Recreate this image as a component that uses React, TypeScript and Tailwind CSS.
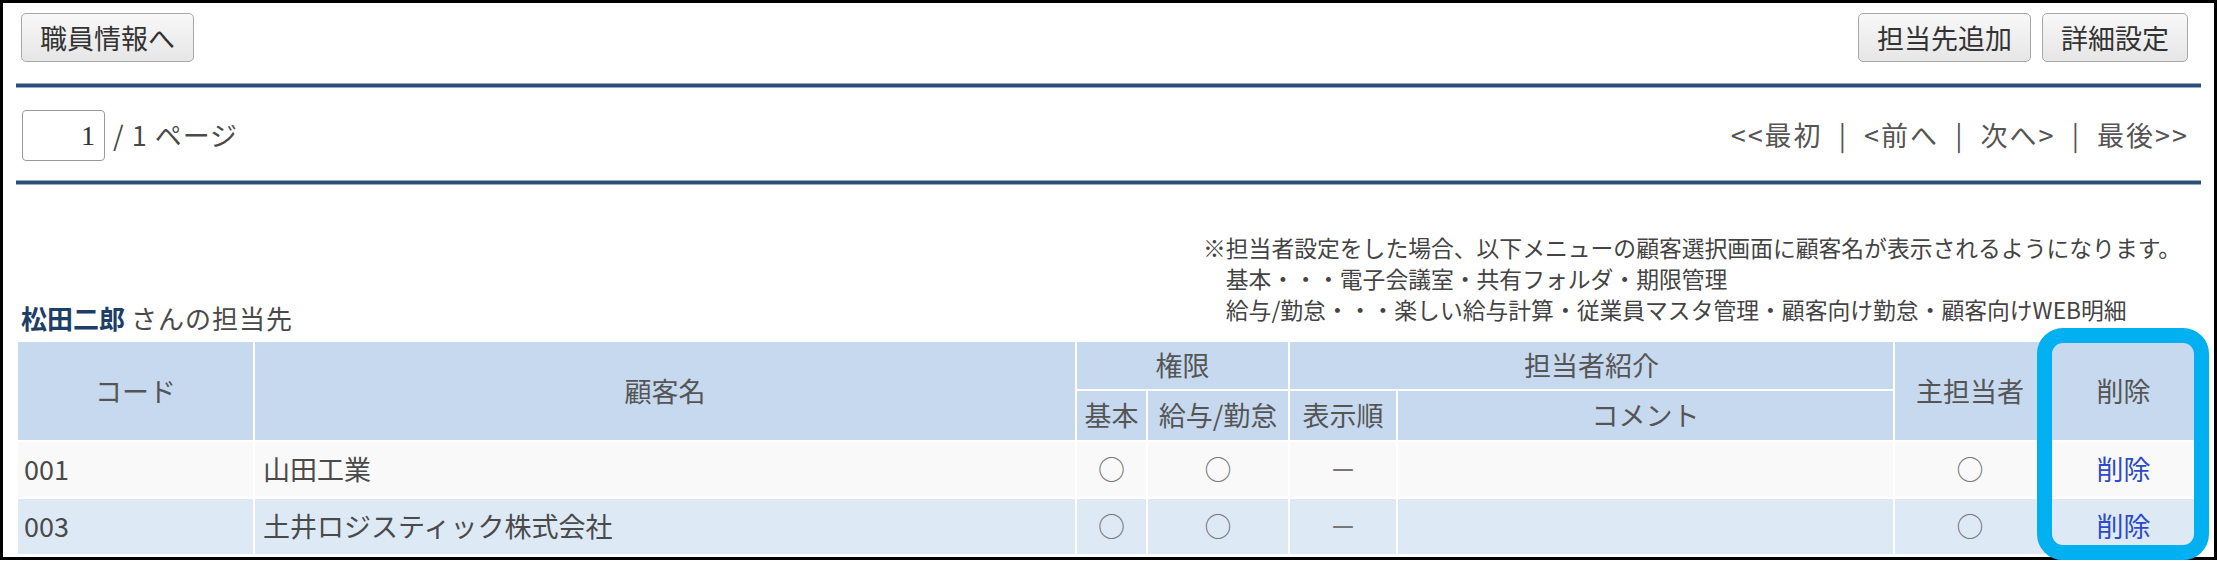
import React from "react";

interface Customer {
  code: string;
  name: string;
  basic: boolean;
  payroll: boolean;
  order: string;
  comment: string;
  main: boolean;
}

const customers: Customer[] = [
  { code: "001", name: "山田工業", basic: true, payroll: true, order: "－", comment: "", main: true },
  { code: "003", name: "土井ロジスティック株式会社", basic: true, payroll: true, order: "－", comment: "", main: true },
];

function Btn({ children }: { children: React.ReactNode }) {
  return (
    <button className="h-[49px] rounded-[5px] border border-[#a8a8a8] bg-gradient-to-b from-[#f8f8f8] to-[#e6e6e6] px-[18px] text-[27px] leading-none text-[#333]">
      {children}
    </button>
  );
}

function Rule() {
  return <div className="h-[5px] border-y border-[#93a9c4] bg-[#2c4e77]" />;
}

export default function App() {
  return (
    <div className="h-[562px] w-[2217px] bg-white font-['Noto_Sans_CJK_JP','Noto_Sans',sans-serif] text-[#4a4a4a]">
      <div className="relative h-[560px] border-[3px] border-black px-[13px]">
        {/* toolbar */}
        <div className="flex justify-between pl-[5px] pr-[13px] pt-[10px]">
          <Btn>職員情報へ</Btn>
          <div className="flex gap-[11px]">
            <Btn>担当先追加</Btn>
            <Btn>詳細設定</Btn>
          </div>
        </div>
        <div className="mt-[21px]">
          <Rule />
        </div>

        {/* paging */}
        <div className="mt-[22px] flex items-center justify-between pl-[6px] pr-[12px]">
          <div className="flex items-center">
            <input
              readOnly
              value="1"
              className="h-[51px] w-[83px] rounded-[4px] border border-[#9a9a9a] bg-white pr-[9px] text-right font-['Liberation_Serif',serif] text-[28px] text-[#333]"
            />
            <span className="ml-[8px] text-[27px] tracking-[1px]">/ 1 ページ</span>
          </div>
          <div className="text-[27px] tracking-[2px] text-[#555]">
            &lt;&lt;最初 &nbsp;|&nbsp; &lt;前へ &nbsp;|&nbsp; 次へ&gt; &nbsp;|&nbsp; 最後&gt;&gt;
          </div>
        </div>
        <div className="mt-[19px]">
          <Rule />
        </div>

        {/* title + note */}
        <div className="mt-[47px] flex items-end justify-between">
          <div className="pb-[4px] pl-[5px] text-[26px] leading-[36px]">
            <span className="font-bold text-[#1d3e66]">松田二郎</span>
            <span className="ml-[6px] tracking-[1px]">さんの担当先</span>
          </div>
          <div className="pb-[15px] pr-[20px] text-[22.8px] leading-[31px] text-[#444]">
            <div>※担当者設定をした場合、以下メニューの顧客選択画面に顧客名が表示されるようになります。</div>
            <div>　基本・・・電子会議室・共有フォルダ・期限管理</div>
            <div>　給与/勤怠・・・楽しい給与計算・従業員マスタ管理・顧客向け勤怠・顧客向けWEB明細</div>
          </div>
        </div>

        {/* table */}
        <table className="w-full table-fixed border-collapse text-[27px]">
          <colgroup>
            <col className="w-[237px]" />
            <col className="w-[822px]" />
            <col className="w-[71px]" />
            <col className="w-[142px]" />
            <col className="w-[108px]" />
            <col className="w-[497px]" />
            <col className="w-[152px]" />
            <col className="w-[155px]" />
          </colgroup>
          <thead className="bg-[#c6d9ef] text-[#555]">
            <tr className="h-[49px]">
              <th rowSpan={2} className="border-2 border-white font-normal">コード</th>
              <th rowSpan={2} className="border-2 border-white font-normal">顧客名</th>
              <th colSpan={2} className="border-2 border-white font-normal">権限</th>
              <th colSpan={2} className="border-2 border-white font-normal">担当者紹介</th>
              <th rowSpan={2} className="border-2 border-white font-normal">主担当者</th>
              <th rowSpan={2} className="border-2 border-white font-normal">削除</th>
            </tr>
            <tr className="h-[51px]">
              <th className="whitespace-nowrap border-2 border-white px-0 font-normal">基本</th>
              <th className="whitespace-nowrap border-2 border-white px-0 font-normal">給与/勤怠</th>
              <th className="whitespace-nowrap border-2 border-white px-0 font-normal">表示順</th>
              <th className="border-2 border-white font-normal">コメント</th>
            </tr>
          </thead>
          <tbody>
            {customers.map((c, i) => (
              <tr key={c.code} className={`h-[57px] ${i % 2 === 0 ? "bg-[#f9f9f9]" : "bg-[#dee9f6]"}`}>
                <td className="border-2 border-white pl-[6px]">{c.code}</td>
                <td className="border-2 border-white pl-[8px]">{c.name}</td>
                <td className="border-2 border-white text-center text-[#777]">{c.basic ? "○" : ""}</td>
                <td className="border-2 border-white text-center text-[#777]">{c.payroll ? "○" : ""}</td>
                <td className="border-2 border-white text-center text-[#777]">{c.order}</td>
                <td className="border-2 border-white">{c.comment}</td>
                <td className="border-2 border-white text-center text-[#777]">{c.main ? "○" : ""}</td>
                <td className="border-2 border-white text-center">
                  <a className="text-[#2d4bc8]">削除</a>
                </td>
              </tr>
            ))}
          </tbody>
        </table>

        {/* highlight around delete column */}
        <div className="absolute left-[2034px] top-[325px] h-[232px] w-[172px] rounded-[26px] border-[15px] border-[#00b0f0]" />
      </div>
    </div>
  );
}
